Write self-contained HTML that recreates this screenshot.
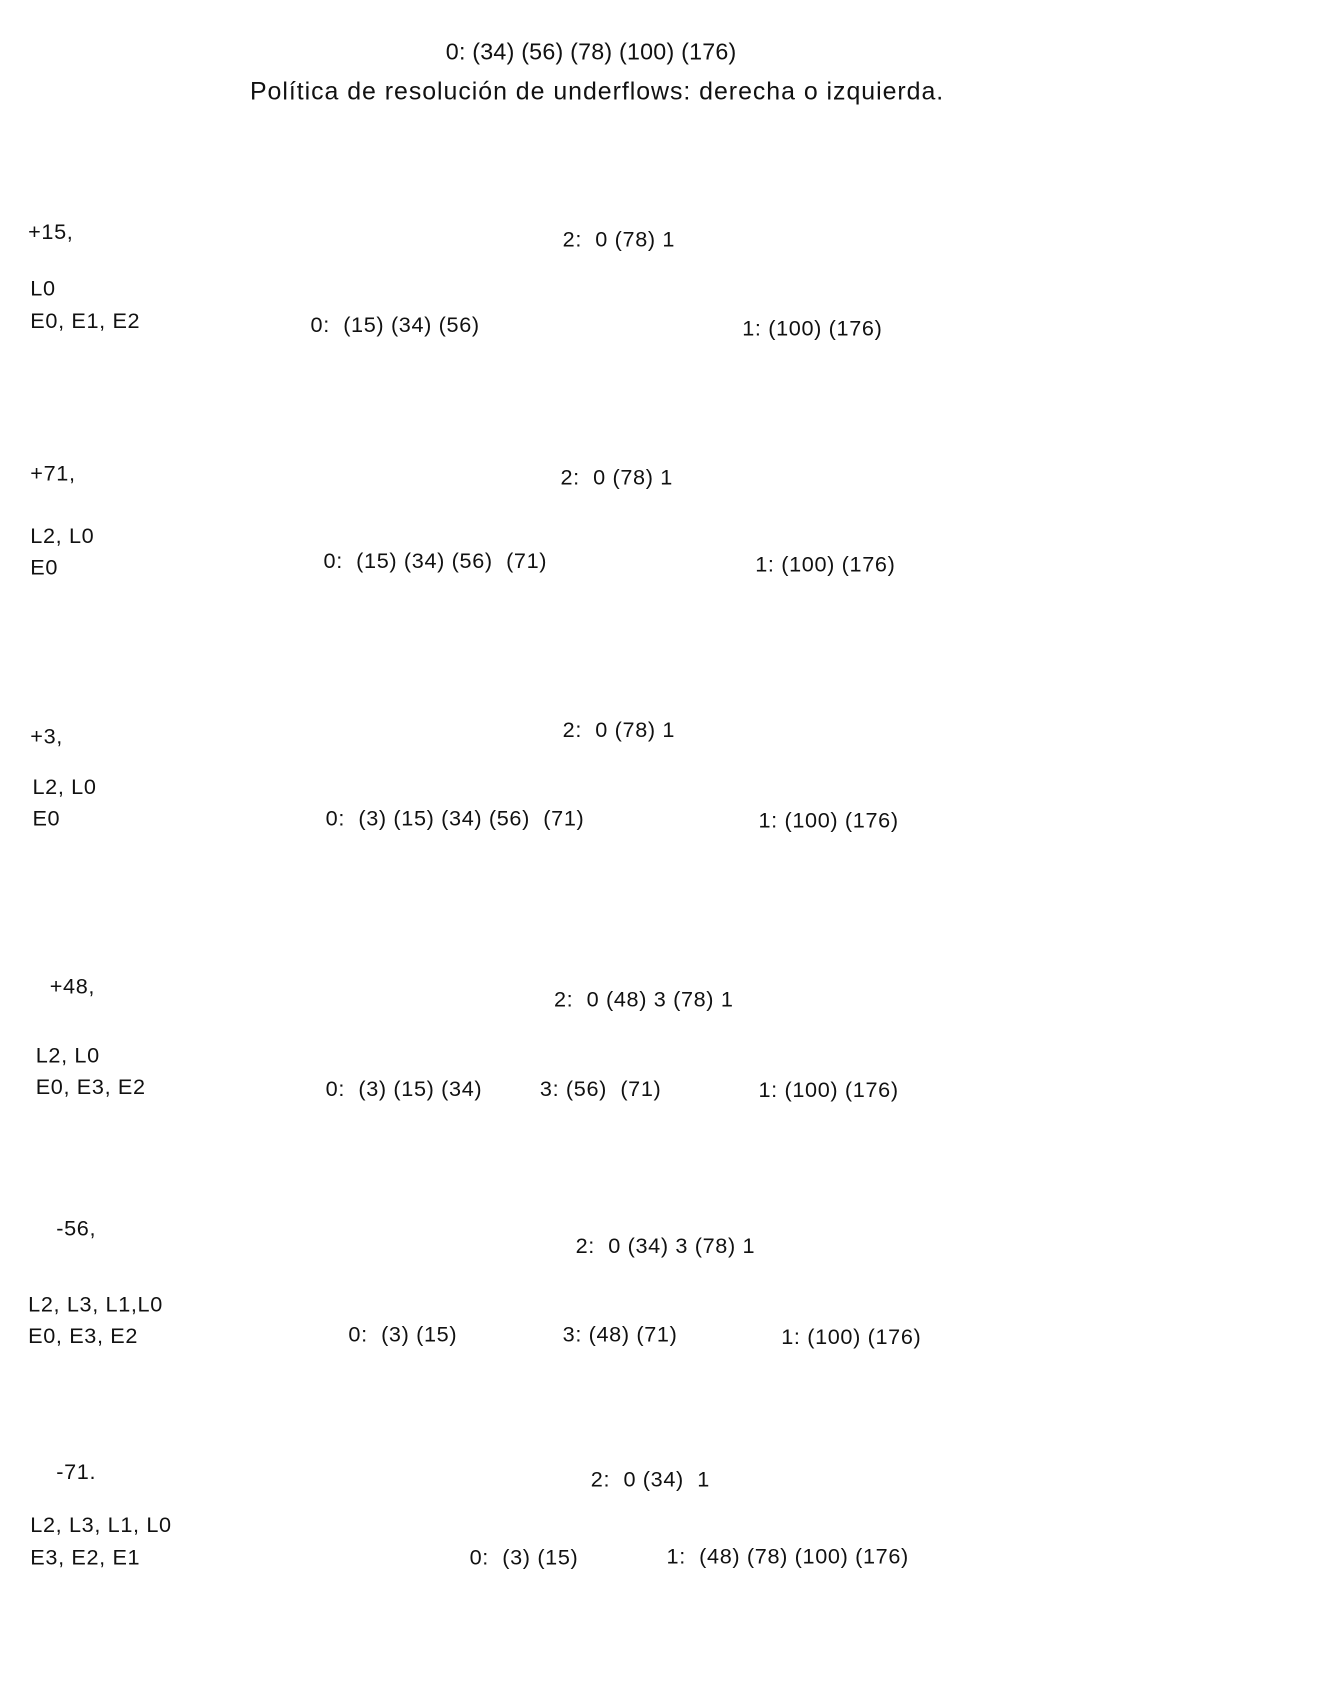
<!DOCTYPE html>
<html><head><meta charset="utf-8">
<style>
html,body{margin:0;padding:0;background:#fff;width:1320px;height:1696px;overflow:hidden}
#c{position:absolute;left:0;top:0;width:1220px;height:1568px;transform:scale(1.082);transform-origin:0 0}
#c div{position:absolute;white-space:pre;font-family:"Liberation Sans",sans-serif;font-size:20px;letter-spacing:0.6px;color:#111;line-height:24px}
#c .h{font-size:21.5px;letter-spacing:0.2px}
#c .t{font-size:23px;letter-spacing:0.9px}
</style></head><body><div id="c">
<div class="h" style="left:412px;top:36px">0: (34) (56) (78) (100) (176)</div>
<div class="t" style="left:231px;top:72px">Política de resolución de underflows: derecha o izquierda.</div>

<div style="left:26px;top:203px">+15,</div>
<div style="left:520px;top:210px">2:  0 (78) 1</div>
<div style="left:28px;top:255px">L0</div>
<div style="left:28px;top:285px">E0, E1, E2</div>
<div style="left:287px;top:289px">0:  (15) (34) (56)</div>
<div style="left:686px;top:292px">1: (100) (176)</div>

<div style="left:28px;top:426px">+71,</div>
<div style="left:518px;top:430px">2:  0 (78) 1</div>
<div style="left:28px;top:484px">L2, L0</div>
<div style="left:28px;top:513px">E0</div>
<div style="left:299px;top:507px">0:  (15) (34) (56)  (71)</div>
<div style="left:698px;top:510px">1: (100) (176)</div>

<div style="left:28px;top:669px">+3,</div>
<div style="left:520px;top:663px">2:  0 (78) 1</div>
<div style="left:30px;top:716px">L2, L0</div>
<div style="left:30px;top:745px">E0</div>
<div style="left:301px;top:745px">0:  (3) (15) (34) (56)  (71)</div>
<div style="left:701px;top:747px">1: (100) (176)</div>

<div style="left:46px;top:900px">+48,</div>
<div style="left:512px;top:912px">2:  0 (48) 3 (78) 1</div>
<div style="left:33px;top:964px">L2, L0</div>
<div style="left:33px;top:993px">E0, E3, E2</div>
<div style="left:301px;top:995px">0:  (3) (15) (34)</div>
<div style="left:499px;top:995px">3: (56)  (71)</div>
<div style="left:701px;top:996px">1: (100) (176)</div>

<div style="left:52px;top:1124px">-56,</div>
<div style="left:532px;top:1140px">2:  0 (34) 3 (78) 1</div>
<div style="left:26px;top:1194px">L2, L3, L1,L0</div>
<div style="left:26px;top:1223px">E0, E3, E2</div>
<div style="left:322px;top:1222px">0:  (3) (15)</div>
<div style="left:520px;top:1222px">3: (48) (71)</div>
<div style="left:722px;top:1224px">1: (100) (176)</div>

<div style="left:52px;top:1349px">-71.</div>
<div style="left:546px;top:1356px">2:  0 (34)  1</div>
<div style="left:28px;top:1398px">L2, L3, L1, L0</div>
<div style="left:28px;top:1428px">E3, E2, E1</div>
<div style="left:434px;top:1428px">0:  (3) (15)</div>
<div style="left:616px;top:1427px">1:  (48) (78) (100) (176)</div>
</div></body></html>
